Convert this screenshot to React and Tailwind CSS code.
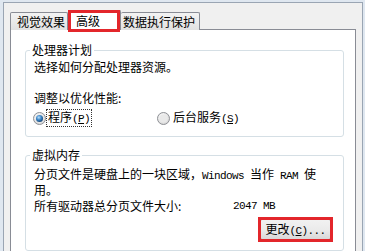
import React from 'react';

const Lat = ({ children }) => (
  <span className="font-['Liberation_Mono'] text-[11px] tracking-[-0.6px]">{children}</span>
);

const Radio = ({ checked }) => (
  <svg width="13" height="13" viewBox="0 0 13 13" className="shrink-0">
    <defs>
      <radialGradient id="rg-off" cx="0.4" cy="0.35" r="0.7">
        <stop offset="0" stopColor="#ffffff" />
        <stop offset="1" stopColor="#d4d4d4" />
      </radialGradient>
      <radialGradient id="rg-on" cx="0.4" cy="0.35" r="0.7">
        <stop offset="0" stopColor="#b9e0fb" />
        <stop offset="0.5" stopColor="#3c86c8" />
        <stop offset="1" stopColor="#12406f" />
      </radialGradient>
    </defs>
    <circle cx="6.5" cy="6.5" r="6" fill="url(#rg-off)" stroke="#8e9095" strokeWidth="1" />
    <circle cx="6.5" cy="6.5" r="4" fill="#e9e9e9" />
    {checked && <circle cx="6.5" cy="6.5" r="3.5" fill="url(#rg-on)" />}
  </svg>
);

const Group = ({ title, className = '', children }) => (
  <fieldset className={`border border-[#d5dfe5] rounded-[3px] pl-[8px] pr-[12px] ${className}`}>
    <legend className="-ml-[4px] px-[2px] leading-[14px]">{title}</legend>
    {children}
  </fieldset>
);

export default function App() {
  return (
    <div className="w-[365px] h-[251px] overflow-hidden bg-[#dfe7f0] pl-[3px] pr-[2px] pt-[2px] font-['Noto_Sans_CJK_SC',sans-serif] text-[12px] text-black">
      <div className="h-full bg-[#f0f0f0] border-l border-r border-t border-[#9aa5b3] pl-[6px] pr-[6px] pt-[7px]">
        {/* tabs */}
        <div className="flex items-end h-[20px]">
          <div className="w-[58px] h-[18px] pl-[6px] pt-[2px] leading-[14px] border border-b-0 border-[#898c95] rounded-t-[2px] bg-gradient-to-b from-[#f3f3f3] to-[#e1e1e1]">
            视觉效果
          </div>
          <div className="relative z-10 w-[53px] h-[20px] pl-[7px] pt-[3px] leading-[14px] border border-b-0 border-[#898c95] rounded-t-[2px] bg-white">
            高级
            <div className="absolute -left-[1px] right-0 -top-[1px] -bottom-[2px] border-[3px] border-[#e3262b]" />
          </div>
          <div className="w-[79px] h-[18px] pl-[2px] pt-[2px] leading-[14px] border border-b-0 border-l-0 border-[#898c95] rounded-t-[2px] bg-gradient-to-b from-[#f3f3f3] to-[#e1e1e1]">
            数据执行保护
          </div>
        </div>

        {/* panel */}
        <div className="-mt-[1px] h-[240px] border border-[#898c95] bg-white pl-[14px] pr-[11px] pt-[13px]">
          <Group title="处理器计划" className="pb-[11px]">
            <div className="mt-[3px] leading-[14px]">选择如何分配处理器资源。</div>
            <div className="mt-[17px] leading-[14px]">调整以优化性能:</div>
            <div className="mt-[6px] flex items-center h-[14px] -ml-[1px]">
              <div className="flex items-center w-[124px]">
                <Radio checked />
                <span className="ml-[1px] px-[1px] leading-[13px] outline outline-1 outline-dotted outline-[#333]">
                  程序<Lat>(<span className="underline">P</span>)</Lat>
                </span>
              </div>
              <div className="flex items-center">
                <Radio />
                <span className="ml-[3px] leading-[13px]">
                  后台服务<Lat>(<span className="underline">S</span>)</Lat>
                </span>
              </div>
            </div>
          </Group>

          <Group title="虚拟内存" className="mt-[11px] pb-[9px]">
            <div className="mt-[5px] leading-[13px]">
              <div>分页文件是硬盘上的一块区域，<Lat>Windows </Lat>当作<Lat> RAM </Lat>使</div>
              <div>用。</div>
            </div>
            <div className="mt-[3px] flex leading-[14px]">
              <span className="w-[199px]">所有驱动器总分页文件大小:</span>
              <Lat>2047 MB</Lat>
            </div>
            <div className="mt-[5px] flex justify-end">
              <div className="relative">
                <button className="w-[71px] h-[23px] border border-[#707070] rounded-[3px] bg-gradient-to-b from-[#f2f2f2] via-[#ebebeb] to-[#d6d6d6] leading-[14px] text-[12px]">
                  更改<Lat>(<span className="underline">C</span>)...</Lat>
                </button>
                <div className="absolute -left-[2px] -right-[2px] -top-[1px] -bottom-[1px] border-[3px] border-[#e3262b]" />
              </div>
            </div>
          </Group>
        </div>
      </div>
    </div>
  );
}
